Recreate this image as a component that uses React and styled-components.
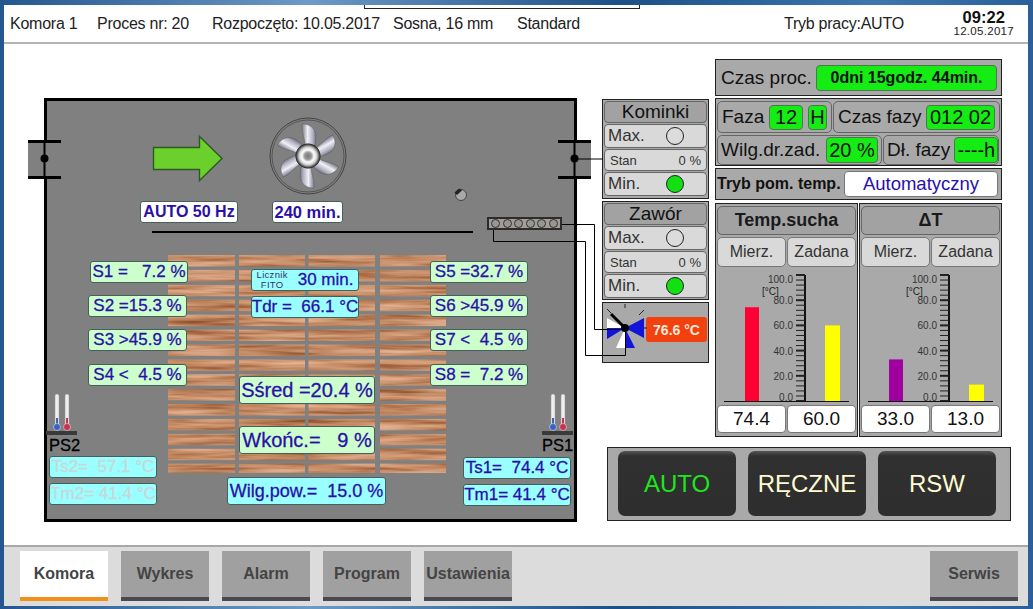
import React from 'react';
import styled, { createGlobalStyle } from 'styled-components';

const GlobalStyle = createGlobalStyle`
html, body { margin: 0; padding: 0; overflow: hidden; }
body { font-family: "Liberation Sans", Arial, sans-serif; background: #1d4f86; }
`;

const Win = styled.div`
position: relative;
width: 1033px;
height: 609px;
box-sizing: border-box;
padding: 5px 5px 3px 4px;
display: flex;
background: linear-gradient(90deg, #24578f, #6d9ac6 30%, #1c4f88 60%, #3d77b0 85%, #2a5f98);
`;
const Inner = styled.div`
flex: 1;
display: flex;
flex-direction: column;
background: #fff;
`;
const TopTab = styled.div`
position: absolute;
left: 364px;
top: 5px;
width: 276px;
height: 4px;
box-sizing: border-box;
background: #fff;
border: 1px solid #222;
border-top: none;
`;
const Header = styled.div`
height: 39px;
box-sizing: border-box;
border-bottom: 2px solid #b4b4b4;
padding-left: 6px;
display: grid;
grid-template-columns: 87px 115px 181px 124px 267px 1fr auto;
align-items: center;
font-size: 16px;
color: #222;
`;
const HeaderItem = styled.div`
white-space: pre;
letter-spacing: -0.25px;
`;
const Clock = styled.div`
margin-right: 14px;
text-align: center;
line-height: 1;
`;
const Time = styled.div`
font-size: 16.5px;
line-height: 15px;
font-weight: bold;
color: #111;
`;
const ClockDate = styled.div`
font-size: 11.5px;
line-height: 12px;
color: #222;
letter-spacing: 0.3px;
`;

const Main = styled.div`
flex: 1;
display: flex;
padding-left: 40px;
gap: 25px;
`;

/* mimic of the kiln: a free canvas, everything on it sits at its place on the drawing */
const Kiln = styled.div`
position: relative;
flex: none;
width: 533px;
height: 424px;
margin-top: 54px;
box-sizing: border-box;
border: 3px solid #000;
background: #808080;
`;
const Tag = styled.div`
position: absolute;
left: ${p => p.$x - 47}px;
top: ${p => p.$y - 101}px;
width: ${p => p.$w}px;
height: ${p => p.$h || 22}px;
box-sizing: border-box;
display: flex;
align-items: center;
justify-content: center;
white-space: pre;
background: ${p => p.$bg || '#ccffcc'};
border: 1px solid #44605a;
border-radius: 3px;
color: ${p => p.$color || '#2a0fa8'};
font-size: ${p => p.$size || 17}px;
font-weight: ${p => (p.$bold ? 'bold' : 'normal')};
-webkit-text-stroke: ${p => (p.$bold ? '0' : '0.3px')};
`;
const TinyNote = styled.div`
font-size: 9.5px;
line-height: 10px;
text-align: center;
margin-right: 10px;
-webkit-text-stroke: 0;
color: #33336a;
letter-spacing: 0.3px;
`;
const Drawing = styled.svg`
position: absolute;
left: ${p => p.$x - 47}px;
top: ${p => p.$y - 101}px;
overflow: visible;
`;
const Probe = styled.div`
position: absolute;
left: ${p => p.$x - 47}px;
top: ${p => p.$y - 101}px;
font-size: 16.5px;
line-height: 17px;
color: #000;
-webkit-text-stroke: 0.3px;
`;
const SplitLine = styled.div`
position: absolute;
left: 105px;
top: 130px;
width: 321px;
height: 2px;
background: #000;
`;
const SensorBar = styled.div`
position: absolute;
left: 440px;
top: 116px;
width: 75px;
height: 13px;
box-sizing: border-box;
border: 2px solid #2c2c2c;
background: #a39d94;
display: flex;
align-items: center;
justify-content: space-evenly;
`;
const SensorHole = styled.span`
width: 9px;
height: 9px;
box-sizing: border-box;
border-radius: 50%;
border: 1px solid #333;
background: #979797;
`;

const Side = styled.div`
flex: none;
display: flex;
flex-direction: column;
padding-top: 15px;
gap: 10px;
`;
const SideTop = styled.div`
display: flex;
gap: 6px;
`;
const MidCol = styled.div`
width: 107px;
margin-top: 40px;
display: flex;
flex-direction: column;
gap: 2px;
`;
const Panel = styled.div`
box-sizing: border-box;
border: 1px solid #222;
background: #a9a9a9;
`;
const DamperPanel = styled(Panel)`
padding: 1px;
display: flex;
flex-direction: column;
gap: 1px;
height: ${p => p.$h}px;
`;
const DamperTitle = styled.div`
height: 22px;
flex: none;
box-sizing: border-box;
border: 1px solid #666;
border-radius: 4px;
background: #a2a2a2;
display: flex;
align-items: center;
justify-content: center;
font-size: 19px;
color: #111;
`;
const DamperRow = styled.div`
height: ${p => p.$h}px;
flex: none;
box-sizing: border-box;
border: 1px solid #666;
border-radius: 4px;
background: #d9d9d9;
display: flex;
align-items: center;
justify-content: space-between;
padding: 0 5px 0 ${p => (p.$small ? 5 : 3)}px;
color: #333;
font-size: ${p => (p.$small ? 13 : 17)}px;
`;
const Lamp = styled.span`
width: 18px;
height: 18px;
box-sizing: border-box;
margin-right: 17px;
border-radius: 50%;
border: 1px solid #222;
background: ${p => (p.$on ? '#12e012' : '#dcdcdc')};
`;
const ValvePanel = styled(Panel)`
height: 61px;
position: relative;
padding: 14px 1px 0 43px;
`;
const TempBox = styled.div`
width: 61px;
height: 25px;
border-radius: 3px;
background: #f2400e;
color: #ffe8d8;
font-size: 14px;
font-weight: bold;
display: flex;
align-items: center;
justify-content: center;
`;
const ValveIcon = styled.svg`
position: absolute;
left: 0;
top: 0;
`;

const RightCol = styled.div`
width: 287px;
display: flex;
flex-direction: column;
gap: 2px;
`;
const ProcPanel = styled(Panel)`
height: 37px;
display: flex;
align-items: center;
padding: 0 4px 0 5px;
justify-content: space-between;
font-size: 19px;
color: #111;
`;
const Chip = styled.div`
width: ${p => p.$w}px;
height: ${p => p.$h || 25}px;
flex: none;
box-sizing: border-box;
border: 1px solid #4a7a4a;
border-radius: 4px;
background: #14ec14;
display: flex;
align-items: center;
justify-content: center;
white-space: pre;
color: #111;
font-size: ${p => p.$size || 20}px;
font-weight: ${p => (p.$bold ? 'bold' : 'normal')};
`;
const PhasePanel = styled(Panel)`
height: 68px;
padding: 2px 1px 0;
display: flex;
flex-direction: column;
gap: 2px;
`;
const PhaseRow = styled.div`
display: flex;
gap: 1px;
height: ${p => p.$h}px;
`;
const PhaseCell = styled.div`
width: ${p => p.$w}px;
box-sizing: border-box;
border: 1px solid #666;
border-radius: 5px;
display: flex;
align-items: center;
justify-content: space-between;
padding: 0 ${p => p.$pad || 4}px;
gap: 4px;
white-space: nowrap;
font-size: 19px;
color: #111;
`;
const ModeRow = styled(Panel)`
height: 32px;
margin-bottom: 1px;
display: flex;
align-items: center;
justify-content: space-between;
padding: 0 3px 0 1px;
font-size: 16px;
font-weight: bold;
color: #111;
`;
const ModeValue = styled.div`
width: 154px;
height: 26px;
box-sizing: border-box;
border: 1px solid #777;
border-radius: 4px;
background: #fff;
display: flex;
align-items: center;
justify-content: center;
font-size: 18.5px;
font-weight: normal;
color: #2a0fb0;
`;
const Charts = styled.div`
display: flex;
gap: 1px;
`;
const ChartPanel = styled(Panel)`
width: 143px;
height: 234px;
padding: 2px 1px 0;
`;
const ChartTitle = styled.div`
height: 29px;
box-sizing: border-box;
border: 1px solid #666;
border-radius: 5px;
background: #a2a2a2;
display: flex;
align-items: center;
justify-content: center;
font-size: 18px;
font-weight: bold;
color: #1a1a1a;
`;
const Pair = styled.div`
display: grid;
grid-template-columns: 1fr 1fr;
gap: 1px;
margin-top: ${p => p.$mt || 0}px;
`;
const HeadCell = styled.div`
height: 30px;
box-sizing: border-box;
border: 1px solid #777;
border-radius: 5px;
background: #d9d9d9;
display: flex;
align-items: center;
justify-content: center;
font-size: 16px;
color: #333;
`;
const ValueCell = styled.div`
height: 28px;
box-sizing: border-box;
border: 1px solid #777;
border-radius: 4px;
background: #fff;
display: flex;
align-items: center;
justify-content: center;
font-size: 19px;
color: #111;
`;
const Scale = styled.svg`
display: block;
font-family: "Liberation Sans", Arial, sans-serif;
`;
const ButtonBar = styled(Panel)`
width: 404px;
height: 74px;
margin-left: 5px;
padding: 3px 0 0 10px;
display: flex;
gap: 12px;
`;
const BigButton = styled.div`
width: 118px;
height: 65px;
border-radius: 7px;
background: linear-gradient(180deg, #555 0, #303030 5px, #2e2e2e 100%);
display: flex;
align-items: center;
justify-content: center;
font-size: 24px;
color: ${p => (p.$on ? '#1ee61e' : '#fffbd2')};
`;

const Footer = styled.div`
height: 61px;
box-sizing: border-box;
border-top: 2px solid #a8a8a8;
background: #dcdcdc;
padding: 4px 10px 0 16px;
display: flex;
gap: 13px;
`;
const Tab = styled.div`
width: 88px;
height: 50px;
box-sizing: border-box;
margin-left: ${p => (p.$end ? 'auto' : '0')};
border-bottom: 4px solid ${p => (p.$on ? '#f09018' : '#4a4850')};
background: ${p => (p.$on ? '#fff' : '#a0a0a0')};
display: flex;
align-items: center;
justify-content: center;
white-space: nowrap;
font-size: 16px;
font-weight: bold;
color: #444;
`;

const chimney = (
  <>
    <rect x="0" y="0" width="33" height="39" fill="#808080" />
    <rect x="0" y="0" width="33" height="3" fill="#000" />
    <rect x="0" y="36" width="33" height="3" fill="#000" />
    <rect x="15.5" y="3" width="2" height="33" fill="#000" />
    <circle cx="16.5" cy="18.5" r="4" fill="#000" />
  </>
);

const planks = [];
[[0, 67], [71, 66], [140.5, 66.5], [212, 66]].forEach(([x, w]) => {
  for (let i = 0; i < 15; i++) planks.push([x, i * 14.9, w, 11.5]);
});

function Wood() {
  return (
    <Drawing $x={168} $y={255} width="278" height="218">
      <defs>
        <filter id="grain" x="0" y="0" width="100%" height="100%" colorInterpolationFilters="sRGB">
          <feTurbulence type="fractalNoise" baseFrequency="0.012 0.2" numOctaves="3" seed="7" />
          <feColorMatrix values="1 0 0 0 0 1 0 0 0 0 1 0 0 0 0 0 0 0 0 1" />
          <feComponentTransfer>
            <feFuncR type="table" tableValues="0.5 0.58 0.68 0.77 0.84 0.89 0.91" />
            <feFuncG type="table" tableValues="0.26 0.33 0.44 0.55 0.63 0.7 0.73" />
            <feFuncB type="table" tableValues="0.14 0.2 0.29 0.4 0.5 0.58 0.62" />
          </feComponentTransfer>
        </filter>
        <clipPath id="planks">
          {planks.map(([x, y, w, h], i) => <rect key={i} x={x} y={y} width={w} height={h} />)}
        </clipPath>
      </defs>
      <g clipPath="url(#planks)">
        <rect width="278" height="218" filter="url(#grain)" />
      </g>
    </Drawing>
  );
}

function Fan() {
  return (
    <Drawing $x={268} $y={116} width="80" height="80" viewBox="-40 -40 80 80">
      <defs>
        <linearGradient id="blade" x1="0" y1="0" x2="1" y2="0">
          <stop offset="0" stopColor="#77778a" />
          <stop offset="0.4" stopColor="#f0f0f6" />
          <stop offset="0.75" stopColor="#b4b4c4" />
          <stop offset="1" stopColor="#70707f" />
        </linearGradient>
        <radialGradient id="hub">
          <stop offset="0" stopColor="#777" />
          <stop offset="0.28" stopColor="#999" />
          <stop offset="0.5" stopColor="#fff" />
          <stop offset="0.72" stopColor="#ccc" />
          <stop offset="1" stopColor="#111" />
        </radialGradient>
      </defs>
      <circle r="38" fill="none" stroke="#444" />
      <circle r="36" fill="none" stroke="#555" />
      {[0, 60, 120, 180, 240, 300].map(a => (
        <path
          key={a}
          transform={`rotate(${a})`}
          d="M-3 -10 C-3 -18 -7 -25 -6 -32 C0 -32 7 -29 8 -21 C8.5 -16 7 -12 6 -8 Z"
          fill="url(#blade)"
          stroke="#555"
          strokeWidth="0.4"
        />
      ))}
      <circle r="12.5" fill="url(#hub)" />
    </Drawing>
  );
}

function Thermo({ x }) {
  return (
    <Drawing $x={x} $y={392} width="32" height="44" viewBox="0 0 32 44">
      <rect x="9" y="2" width="4" height="33" rx="2" fill="#eee" stroke="#999" strokeWidth="0.5" />
      <rect x="19" y="2" width="4" height="33" rx="2" fill="#eee" stroke="#999" strokeWidth="0.5" />
      <rect x="10" y="26" width="2" height="8" fill="#3a62c0" />
      <rect x="20" y="26" width="2" height="8" fill="#c8324a" />
      <circle cx="11" cy="35" r="3.5" fill="#3a62c0" stroke="#dde" strokeWidth="0.6" />
      <circle cx="21" cy="35" r="3.5" fill="#c8324a" stroke="#dde" strokeWidth="0.6" />
      <rect x="0" y="39" width="31" height="4" fill="#3a3a3a" />
    </Drawing>
  );
}

function Damper({ title, h }) {
  return (
    <DamperPanel $h={h}>
      <DamperTitle>{title}</DamperTitle>
      <DamperRow $h={24}>Max.<Lamp /></DamperRow>
      <DamperRow $h={22} $small>Stan<span>0 %</span></DamperRow>
      <DamperRow $h={24}>Min.<Lamp $on /></DamperRow>
    </DamperPanel>
  );
}

const ticks = [];
for (let v = 0; v <= 100; v += 4) ticks.push(v);
const labelShift = { 0: 0, 100: 8 };

function Chart({ title, a, b, colorA, colorB }) {
  const top = v => 134 - v * 1.26;
  return (
    <ChartPanel>
      <ChartTitle>{title}</ChartTitle>
      <Pair $mt={2}>
        <HeadCell>Mierz.</HeadCell>
        <HeadCell>Zadana</HeadCell>
      </Pair>
      <Scale width="139" height="138" viewBox="0 0 139 138">
        <rect x="28" y={top(a)} width="14" height={134 - top(a)} fill={colorA} />
        <rect x="108" y={top(b)} width="15" height={134 - top(b)} fill={colorB} />
        <rect x="87" y="8" width="2" height="126" fill="#111" />
        {ticks.map(v => (
          <rect key={v} x="79" y={top(v) - (v % 20 === 0 ? 1 : 0.5)} width="9" height={v % 20 === 0 ? 2 : 1} fill="#222" />
        ))}
        {[0, 20, 40, 60, 80, 100].map(v => (
          <text key={v} x="76" y={top(v) + (v in labelShift ? labelShift[v] : 4)} textAnchor="end" fontSize="10" fill="#333">{v.toFixed(1)}</text>
        ))}
        <text x="45" y="28" fontSize="10" fill="#222">[°C]</text>
        <rect x="7" y="134" width="125" height="1" fill="#111" />
      </Scale>
      <Pair>
        <ValueCell>{a.toFixed(1)}</ValueCell>
        <ValueCell>{b.toFixed(1)}</ValueCell>
      </Pair>
    </ChartPanel>
  );
}

const cyan = '#99ffff';
const Wires = styled.svg`
position: absolute;
left: 0;
top: 0;
pointer-events: none;
`;

export default function App() {
  return (
    <Win>
      <GlobalStyle />
      <Inner>
        <Header>
          <HeaderItem>Komora 1</HeaderItem>
          <HeaderItem>Proces nr: 20</HeaderItem>
          <HeaderItem>Rozpoczęto: 10.05.2017</HeaderItem>
          <HeaderItem>Sosna, 16 mm</HeaderItem>
          <HeaderItem>Standard</HeaderItem>
          <HeaderItem>Tryb pracy:AUTO</HeaderItem>
          <Clock>
            <Time>09:22</Time>
            <ClockDate>12.05.2017</ClockDate>
          </Clock>
        </Header>
        <Main>
          <Kiln>
            <Drawing $x={28} $y={140} width="33" height="39">{chimney}</Drawing>
            <Drawing $x={558} $y={140} width="33" height="39">{chimney}</Drawing>
            <Drawing $x={152} $y={135} width="72" height="47" viewBox="0 0 72 47">
              <path d="M1.5 12.5H47.5V1.5L70 23.5L47.5 45.5V34.5H1.5Z" fill="#6cd02c" stroke="#2c5a22" strokeWidth="1.4" />
            </Drawing>
            <Fan />
            <Tag $x={140} $y={201} $w={98} $bg="#fff" $size={16} $bold>AUTO 50 Hz</Tag>
            <Tag $x={272} $y={201} $w={71} $bg="#fff" $size={16.5} $bold>240 min.</Tag>
            <Drawing $x={452} $y={186} width="16" height="16" viewBox="0 0 16 16">
              <circle cx="9" cy="9" r="5.5" fill="#a8a8a8" stroke="#444" />
              <path d="M2.5 6.5L7 2.5L10 4.5L5 9Z" fill="#222" />
            </Drawing>
            <SplitLine />
            <SensorBar>
              {[0, 1, 2, 3, 4, 5].map(i => <SensorHole key={i} />)}
            </SensorBar>
            <Wood />

            <Tag $x={90} $y={261} $w={98}>S1 =   7.2 %</Tag>
            <Tag $x={88} $y={295} $w={99}>S2 =15.3 %</Tag>
            <Tag $x={88} $y={329} $w={99}>S3 &gt;45.9 %</Tag>
            <Tag $x={88} $y={364} $w={99}>S4 &lt;  4.5 %</Tag>
            <Tag $x={430} $y={261} $w={98}>S5 =32.7 %</Tag>
            <Tag $x={430} $y={295} $w={98}>S6 &gt;45.9 %</Tag>
            <Tag $x={430} $y={329} $w={98}>S7 &lt;  4.5 %</Tag>
            <Tag $x={430} $y={364} $w={98}>S8 =  7.2 %</Tag>

            <Tag $x={251} $y={269} $w={108} $bg={cyan}><TinyNote>Licznik<br />FITO</TinyNote>30 min.</Tag>
            <Tag $x={251} $y={296} $w={108} $bg={cyan}>Tdr =  66.1 °C</Tag>
            <Tag $x={239} $y={376} $w={136} $h={28} $size={20}>Sśred =20.4 %</Tag>
            <Tag $x={239} $y={426} $w={136} $h={28} $size={20}>Wkońc.=   9 %</Tag>
            <Tag $x={227} $y={477} $w={159} $h={28} $size={18} $bg={cyan}>Wilg.pow.=  15.0 %</Tag>

            <Thermo x={46} />
            <Probe $x={49} $y={437}>PS2</Probe>
            <Tag $x={49} $y={456} $w={108} $bg={cyan} $color="#c8d8d8">Ts2=  57.1 °C</Tag>
            <Tag $x={49} $y={483} $w={108} $bg={cyan} $color="#c8d8d8">Tm2= 41.4 °C</Tag>

            <Thermo x={542} />
            <Probe $x={542} $y={437}>PS1</Probe>
            <Tag $x={463} $y={457} $w={108} $bg={cyan}>Ts1=  74.4 °C</Tag>
            <Tag $x={463} $y={484} $w={108} $bg={cyan}>Tm1= 41.4 °C</Tag>
          </Kiln>
          <Side>
            <SideTop>
              <MidCol>
                <Damper title="Kominki" h={100} />
                <Damper title="Zawór" h={99} />
                <ValvePanel>
                  <ValveIcon width="60" height="60" viewBox="602 303 60 60">
                    <path d="M624 328L606 318V328Z" fill="#fff" />
                    <path d="M624 328L606 328V339Z" fill="#1414d8" />
                    <path d="M624 328L643 318V338Z" fill="#1414d8" />
                    <path d="M624 328L615 348H624Z" fill="#fff" />
                    <path d="M624 328V348H634Z" fill="#1414d8" />
                    <path d="M610 314L624 328" stroke="#000" strokeWidth="3" />
                    <path d="M624 304V308M606 309L610 313M643 310L638 315" stroke="#222" strokeWidth="1" />
                    <path d="M643 328H646" stroke="#222" strokeWidth="1" />
                    <circle cx="624" cy="328" r="4" fill="#000" />
                    <path d="M676 342V358" stroke="#222" strokeWidth="1" />
                  </ValveIcon>
                  <TempBox>76.6 °C</TempBox>
                </ValvePanel>
              </MidCol>
              <RightCol>
                <ProcPanel>
                  Czas proc.
                  <Chip $w={181} $h={26} $size={16} $bold>0dni 15godz. 44min.</Chip>
                </ProcPanel>
                <PhasePanel>
                  <PhaseRow $h={32}>
                    <PhaseCell $w={115}>
                      Faza
                      <Chip $w={34}>12</Chip>
                      <Chip $w={19}>H</Chip>
                    </PhaseCell>
                    <PhaseCell $w={167}>
                      Czas fazy
                      <Chip $w={69}>012 02</Chip>
                    </PhaseCell>
                  </PhaseRow>
                  <PhaseRow $h={30}>
                    <PhaseCell $w={165} $pad={3}>
                      Wilg.dr.zad.
                      <Chip $w={52} $h={26}>20 %</Chip>
                    </PhaseCell>
                    <PhaseCell $w={116} $pad={3}>
                      Dł. fazy
                      <Chip $w={44} $h={26}>----h</Chip>
                    </PhaseCell>
                  </PhaseRow>
                </PhasePanel>
                <ModeRow>
                  Tryb pom. temp.
                  <ModeValue>Automatyczny</ModeValue>
                </ModeRow>
                <Charts>
                  <Chart title="Temp.sucha" a={74.4} b={60} colorA="#ff0033" colorB="#ffff00" />
                  <Chart title="ΔT" a={33} b={13} colorA="#a000a0" colorB="#ffff00" />
                </Charts>
              </RightCol>
            </SideTop>
            <ButtonBar>
              <BigButton $on>AUTO</BigButton>
              <BigButton>RĘCZNE</BigButton>
              <BigButton>RSW</BigButton>
            </ButtonBar>
          </Side>
        </Main>
        <Footer>
          <Tab $on>Komora</Tab>
          <Tab>Wykres</Tab>
          <Tab>Alarm</Tab>
          <Tab>Program</Tab>
          <Tab>Ustawienia</Tab>
          <Tab $end>Serwis</Tab>
        </Footer>
      </Inner>
      <TopTab />
      <Wires width="1033" height="609" viewBox="0 0 1033 609">
        <path d="M575 159H603" fill="none" stroke="#000" />
        <path d="M562 224.5H594.5V329.5H620" fill="none" stroke="#000" />
        <path d="M493.5 230V241.5H585.5V355.5H625.5V332" fill="none" stroke="#000" />
      </Wires>
    </Win>
  );
}
